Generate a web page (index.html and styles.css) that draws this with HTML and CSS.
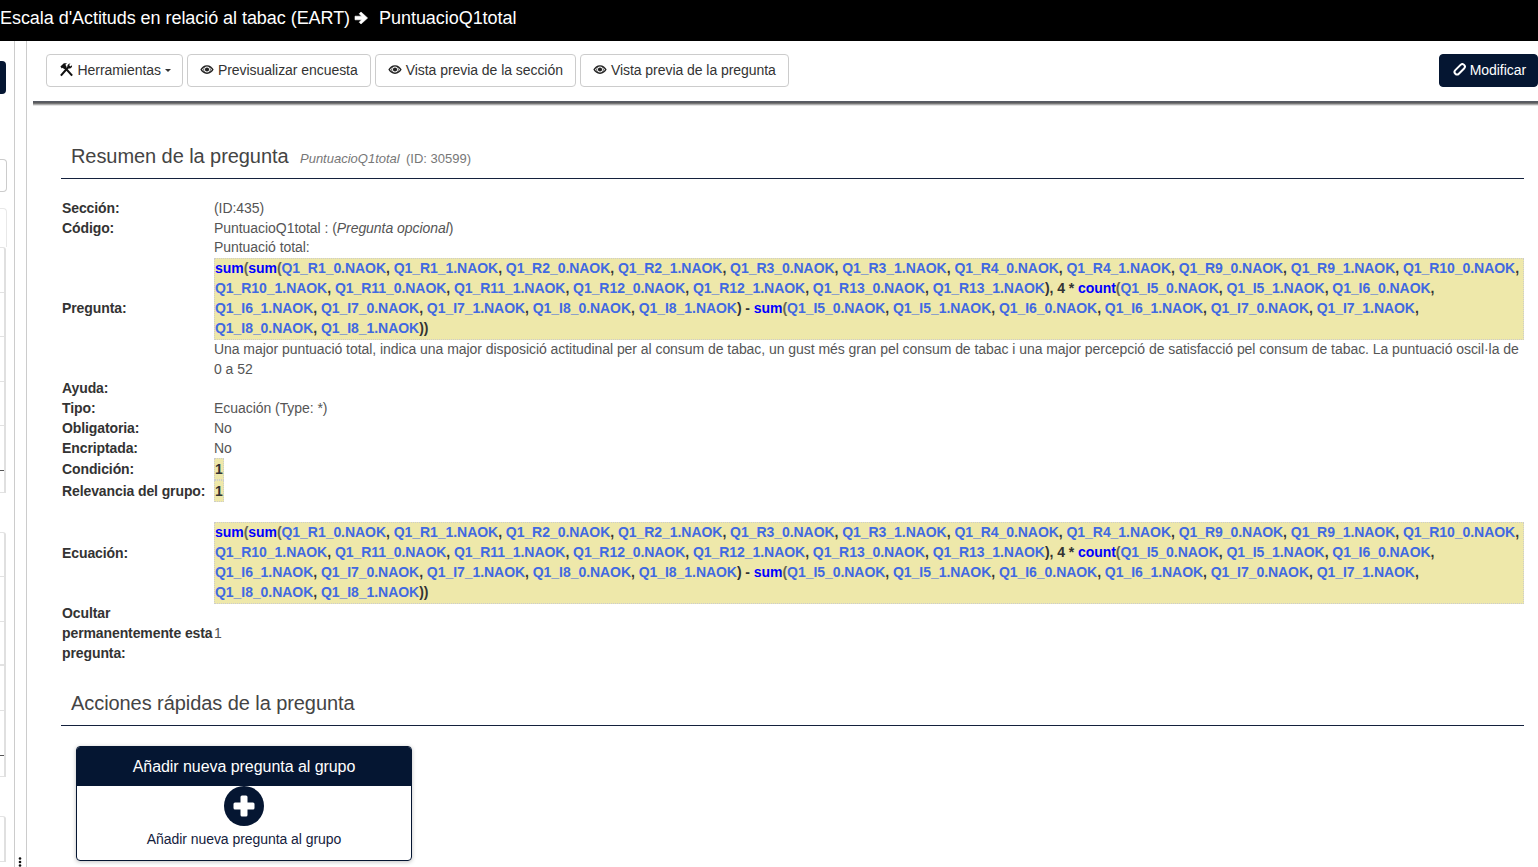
FILE: index.html
```html
<!DOCTYPE html>
<html lang="es">
<head>
<meta charset="utf-8">
<title>PuntuacioQ1total</title>
<link rel="stylesheet" href="styles.css">
</head>
<body>
<header class="topbar">
  <span>Escala d'Actituds en relació al tabac (EART)</span>
  <svg class="arrow" viewBox="0 0 16 14"><path d="M1 5.200h6.600L5.200 2.700 7 1l6.600 6L7 13l-1.800-1.700 2.400-2.500H1z" fill="#fff" stroke="#fff" stroke-width=".6" stroke-linejoin="round"/></svg>
  <span>PuntuacioQ1total</span>
</header>
<div class="layout">
  <aside class="sidebar">
    <div class="tree">
      <div class="s-btn"></div>
      <div class="s-input"></div>
      <div class="s-panel"></div>
      <div class="s-list">
        <div class="s-row"></div><div class="s-row"></div><div class="s-row"></div><div class="s-row"></div><div class="s-row s-dark"></div><div class="s-row s-short"></div>
      </div>
      <div class="s-list s-list2">
        <div class="s-row"></div><div class="s-row"></div><div class="s-row s-thick"></div><div class="s-row"></div><div class="s-row s-dark"></div><div class="s-row s-short"></div>
      </div>
      <div class="s-list s-list3">
        <div class="s-row"></div>
      </div>
    </div>
    <svg class="dots" viewBox="0 0 4 10"><circle cx="2" cy="1.500" r="1.300"/><circle cx="2" cy="5" r="1.300"/><circle cx="2" cy="8.500" r="1.300"/></svg>
  </aside>
  <main class="content">
    <nav class="toolbar">
      <a class="btn">
        <svg class="ico-tools" viewBox="0 0 16 16"><path d="M2 14.500 9.800 5.600M14 14.500 5 4.500" fill="none" stroke="#111" stroke-width="2.200"/><path d="M1.500 4.800 5.200 1.200h3.300L6.800 3l1.400 2.400-2.400 2.200-2-1.500-.8.700z" fill="#111"/><path d="M9 5.500c-.6-2 .8-4 3.200-4L10.800 3.300l1.200 1.500 1.900-1.300c.5 2.200-1.500 3.900-3.400 3.300z" fill="#111"/></svg>
        Herramientas <i class="caret"></i>
      </a>
      <a class="btn"><svg class="ico-eye" viewBox="0 0 16 12"><path fill-rule="evenodd" d="M8 1C4.500 1 1.800 3.300.4 6 1.800 8.700 4.500 11 8 11s6.200-2.300 7.600-5C14.200 3.300 11.500 1 8 1zM8 2.600a3.400 3.400 0 1 1 0 6.800 3.400 3.400 0 0 1 0-6.800zM2.300 6c.6-1 1.400-1.800 2.300-2.400a4.600 4.600 0 0 0 0 4.800C3.700 7.800 2.900 7 2.300 6zm11.400 0c-.6 1-1.400 1.800-2.300 2.400a4.600 4.600 0 0 0 0-4.800c.9.600 1.700 1.400 2.300 2.400z" fill="#222"/><circle cx="8" cy="6" r="2.400" fill="#222"/></svg> Previsualizar encuesta</a>
      <a class="btn"><svg class="ico-eye" viewBox="0 0 16 12"><path fill-rule="evenodd" d="M8 1C4.500 1 1.800 3.300.4 6 1.800 8.700 4.500 11 8 11s6.200-2.300 7.600-5C14.200 3.300 11.500 1 8 1zM8 2.600a3.400 3.400 0 1 1 0 6.800 3.400 3.400 0 0 1 0-6.800zM2.300 6c.6-1 1.400-1.800 2.300-2.400a4.600 4.600 0 0 0 0 4.800C3.700 7.800 2.900 7 2.300 6zm11.400 0c-.6 1-1.400 1.800-2.300 2.400a4.600 4.600 0 0 0 0-4.800c.9.600 1.700 1.400 2.300 2.400z" fill="#222"/><circle cx="8" cy="6" r="2.400" fill="#222"/></svg> Vista previa de la sección</a>
      <a class="btn"><svg class="ico-eye" viewBox="0 0 16 12"><path fill-rule="evenodd" d="M8 1C4.500 1 1.800 3.300.4 6 1.800 8.700 4.500 11 8 11s6.200-2.300 7.600-5C14.200 3.300 11.500 1 8 1zM8 2.600a3.400 3.400 0 1 1 0 6.800 3.400 3.400 0 0 1 0-6.800zM2.300 6c.6-1 1.400-1.800 2.300-2.400a4.600 4.600 0 0 0 0 4.800C3.700 7.800 2.900 7 2.300 6zm11.400 0c-.6 1-1.400 1.800-2.300 2.400a4.600 4.600 0 0 0 0-4.800c.9.600 1.700 1.400 2.300 2.400z" fill="#222"/><circle cx="8" cy="6" r="2.400" fill="#222"/></svg> Vista previa de la pregunta</a>
      <a class="btn btn-primary"><svg class="ico-pencil" viewBox="0 0 14 14"><rect x="-1.200" y="4.800" width="12.400" height="5" rx="2.500" transform="rotate(-45 7 7) translate(3 -.3)" fill="none" stroke="#fff" stroke-width="2"/></svg> Modificar</a>
    </nav>
    <div class="toolbar-rule"></div>
    <section class="panel">
      <h3 class="heading">Resumen de la pregunta <small class="sub"><em>PuntuacioQ1total</em> &nbsp;(ID: 30599)</small></h3>
      <table class="summary">
        <tr><th>Sección:</th><td>(ID:435)</td></tr>
        <tr><th>Código:</th><td>PuntuacioQ1total : (<em>Pregunta opcional</em>)</td></tr>
        <tr><th>Pregunta:</th><td><span class="lead">Puntuació total:</span>
          <div class="em"><b class="f">sum</b><b class="p">(</b><b class="f">sum</b><b class="p">(</b><b class="v">Q1_R1_0.NAOK</b>, <b class="v">Q1_R1_1.NAOK</b>, <b class="v">Q1_R2_0.NAOK</b>, <b class="v">Q1_R2_1.NAOK</b>, <b class="v">Q1_R3_0.NAOK</b>, <b class="v">Q1_R3_1.NAOK</b>, <b class="v">Q1_R4_0.NAOK</b>, <b class="v">Q1_R4_1.NAOK</b>, <b class="v">Q1_R9_0.NAOK</b>, <b class="v">Q1_R9_1.NAOK</b>, <b class="v">Q1_R10_0.NAOK</b>, <b class="v">Q1_R10_1.NAOK</b>, <b class="v">Q1_R11_0.NAOK</b>, <b class="v">Q1_R11_1.NAOK</b>, <b class="v">Q1_R12_0.NAOK</b>, <b class="v">Q1_R12_1.NAOK</b>, <b class="v">Q1_R13_0.NAOK</b>, <b class="v">Q1_R13_1.NAOK</b>), 4 * <b class="f">count</b><b class="p">(</b><b class="v">Q1_I5_0.NAOK</b>, <b class="v">Q1_I5_1.NAOK</b>, <b class="v">Q1_I6_0.NAOK</b>, <b class="v">Q1_I6_1.NAOK</b>, <b class="v">Q1_I7_0.NAOK</b>, <b class="v">Q1_I7_1.NAOK</b>, <b class="v">Q1_I8_0.NAOK</b>, <b class="v">Q1_I8_1.NAOK</b>) - <b class="f">sum</b><b class="p">(</b><b class="v">Q1_I5_0.NAOK</b>, <b class="v">Q1_I5_1.NAOK</b>, <b class="v">Q1_I6_0.NAOK</b>, <b class="v">Q1_I6_1.NAOK</b>, <b class="v">Q1_I7_0.NAOK</b>, <b class="v">Q1_I7_1.NAOK</b>, <b class="v">Q1_I8_0.NAOK</b>, <b class="v">Q1_I8_1.NAOK</b>))</div>
          <p class="desc">Una major puntuació total, indica una major disposició actitudinal per al consum de tabac, un gust més gran pel consum de tabac i una major percepció de satisfacció pel consum de tabac. La puntuació oscil·la de 0 a 52</p></td></tr>
        <tr><th>Ayuda:</th><td></td></tr>
        <tr><th>Tipo:</th><td>Ecuación (Type: *)</td></tr>
        <tr><th>Obligatoria:</th><td>No</td></tr>
        <tr><th>Encriptada:</th><td>No</td></tr>
        <tr><th>Condición:</th><td><span class="em em-one">1</span></td></tr>
        <tr><th>Relevancia del grupo:</th><td><span class="em em-one">1</span></td></tr>
        <tr><th>Ecuación:</th><td><br>
          <div class="em"><b class="f">sum</b><b class="p">(</b><b class="f">sum</b><b class="p">(</b><b class="v">Q1_R1_0.NAOK</b>, <b class="v">Q1_R1_1.NAOK</b>, <b class="v">Q1_R2_0.NAOK</b>, <b class="v">Q1_R2_1.NAOK</b>, <b class="v">Q1_R3_0.NAOK</b>, <b class="v">Q1_R3_1.NAOK</b>, <b class="v">Q1_R4_0.NAOK</b>, <b class="v">Q1_R4_1.NAOK</b>, <b class="v">Q1_R9_0.NAOK</b>, <b class="v">Q1_R9_1.NAOK</b>, <b class="v">Q1_R10_0.NAOK</b>, <b class="v">Q1_R10_1.NAOK</b>, <b class="v">Q1_R11_0.NAOK</b>, <b class="v">Q1_R11_1.NAOK</b>, <b class="v">Q1_R12_0.NAOK</b>, <b class="v">Q1_R12_1.NAOK</b>, <b class="v">Q1_R13_0.NAOK</b>, <b class="v">Q1_R13_1.NAOK</b>), 4 * <b class="f">count</b><b class="p">(</b><b class="v">Q1_I5_0.NAOK</b>, <b class="v">Q1_I5_1.NAOK</b>, <b class="v">Q1_I6_0.NAOK</b>, <b class="v">Q1_I6_1.NAOK</b>, <b class="v">Q1_I7_0.NAOK</b>, <b class="v">Q1_I7_1.NAOK</b>, <b class="v">Q1_I8_0.NAOK</b>, <b class="v">Q1_I8_1.NAOK</b>) - <b class="f">sum</b><b class="p">(</b><b class="v">Q1_I5_0.NAOK</b>, <b class="v">Q1_I5_1.NAOK</b>, <b class="v">Q1_I6_0.NAOK</b>, <b class="v">Q1_I6_1.NAOK</b>, <b class="v">Q1_I7_0.NAOK</b>, <b class="v">Q1_I7_1.NAOK</b>, <b class="v">Q1_I8_0.NAOK</b>, <b class="v">Q1_I8_1.NAOK</b>))</div></td></tr>
        <tr><th>Ocultar permanentemente esta pregunta:</th><td>1</td></tr>
      </table>
      <h3 class="heading heading-actions">Acciones rápidas de la pregunta</h3>
      <div class="card">
        <div class="card-head">Añadir nueva pregunta al grupo</div>
        <div class="card-body">
          <svg class="ico-plus" viewBox="0 0 40 40"><circle cx="20" cy="20" r="20" fill="#051632"/><rect x="9.500" y="16.500" width="21" height="7" rx="1.500" fill="#fff"/><rect x="16.500" y="9.500" width="7" height="21" rx="1.500" fill="#fff"/></svg>
          <p class="card-text">Añadir nueva pregunta al grupo</p>
        </div>
      </div>
    </section>
  </main>
</div>
</body>
</html>
```
FILE: styles.css
```css
* { box-sizing: border-box; }
html, body { height: 100%; }
body {
  margin: 0;
  overflow: hidden;
  background: #fff;
  color: #333;
  font-family: "Liberation Sans", Arial, sans-serif;
  font-size: 14px;
  line-height: 20px;
  letter-spacing: -.05px;
}
.topbar {
  display: flex;
  align-items: center;
  height: 41px;
  padding-bottom: 6px;
  background: #000;
  color: #fff;
  font-size: 18px;
  white-space: nowrap;
}
.arrow { width: 16px; height: 14px; margin: 1px 9px 0 4px; }
.layout { display: flex; height: 826px; }

.sidebar {
  position: relative;
  flex: 0 0 27px;
  border-right: 1px solid #ccc;
}
.tree {
  width: 15px;
  height: 100%;
  border-right: 1px solid #ccc;
  padding-top: 20px;
}
.s-btn {
  width: 6px;
  height: 33px;
  background: #051632;
  border-radius: 0 4px 4px 0;
}
.s-input {
  width: 7px;
  height: 33px;
  margin-top: 65px;
  border: 1px solid #ccc;
  border-left: 0;
  border-radius: 0 4px 4px 0;
}
.s-panel {
  width: 7px;
  height: 39px;
  margin-top: 16px;
  border: 1px solid #e8e8e8;
  border-left: 0;
  border-bottom: 0;
  border-radius: 0 4px 0 0;
}
.s-list {
  width: 6px;
  border-top: 1px solid #e4e4e4;
  border-right: 2px solid #e0e0e0;
  border-radius: 0 3px 0 0;
}
.s-list2 { margin-top: 39px; }
.s-list3 { margin-top: 39px; }
.s-row { height: 44.6px; border-bottom: 1px solid #e2e2e2; }
.s-short { height: 21.600px; }
.s-dark { border-bottom-color: #555; }
.s-thick { border-bottom-width: 2px; }
.dots {
  position: absolute;
  left: 18px;
  bottom: 0;
  width: 4px;
  height: 10px;
  fill: #111;
}

.content { flex: 1; min-width: 0; padding-left: 6px; }
.toolbar {
  display: flex;
  gap: 4px;
  height: 60px;
  padding: 13px 0 0 13px;
  background: #fff;
}
.toolbar-rule {
  height: 5px;
  background: linear-gradient(#555a66, #5c5c5c 40%, #c8c8c8 80%, #fff);
}
.btn {
  display: flex;
  align-items: center;
  height: 33px;
  padding: 0 12.500px 2px 12px;
  border: 1px solid #ccc;
  border-radius: 4px;
  background: #fff;
  color: #333;
  white-space: nowrap;
}
.btn svg { margin-right: 3.500px; flex: none; }
.btn-primary {
  margin-left: auto;
  background: #051632;
  border-color: #051632;
  color: #fff;
  padding-right: 11px;
}
.ico-tools { width: 15px; height: 15px; }
.ico-eye { width: 14px; height: 11px; }
.ico-pencil { width: 14px; height: 14px; }
.caret {
  display: inline-block;
  width: 0;
  height: 0;
  margin: 2px -1px 0 4px;
  border-top: 3.5px solid #333;
  border-left: 3.5px solid transparent;
  border-right: 3.5px solid transparent;
}

.panel { padding: 0 14px 0 28px; }
.heading {
  margin: 36px 0 0;
  height: 37px;
  padding-left: 10px;
  border-bottom: 1px solid #14213d;
  color: #444;
  font-size: 20px;
  font-weight: 400;
  line-height: 28px;
  letter-spacing: -.07px;
}
.sub { margin-left: 6px; color: #777; font-size: 13px; letter-spacing: 0; }
.sub em { margin-right: -1px; }
.heading-actions { margin-top: 26px; }
.summary {
  width: 100%;
  margin-top: 19px;
  border-collapse: collapse;
}
.summary th {
  width: 153px;
  padding: 0 0 0 1px;
  color: #333;
  font-weight: 700;
  text-align: left;
  vertical-align: middle;
  letter-spacing: -.1px;
}
.summary td { padding: 0; color: #555; vertical-align: middle; }
.lead { display: block; height: 20px; line-height: 18px; }
.desc { margin: 0 0 -1px; }
.em {
  margin-bottom: -1px;
  padding-bottom: 1px;
  background: #eee8aa;
  border: 1px dotted #ccc;
  color: #333;
  font-weight: 700;
}
.em::before { content: ""; display: block; margin-top: -1px; }
.em-one { display: inline-block; margin-bottom: 0; padding: 0; height: 22px; }
.em-one::before { display: none; }
.f { color: #00f; }
.p { color: #665; }
.v { color: #4169e1; }

.card {
  width: 336px;
  height: 115px;
  margin: 20px 0 0 15px;
  border: 1px solid #051632;
  border-radius: 4px;
  box-shadow: 0 1px 4px rgba(0, 0, 0, .25);
  text-align: center;
  overflow: hidden;
}
.card-head {
  height: 39px;
  background: #051632;
  color: #fff;
  font-size: 16px;
  line-height: 39px;
}
.card-body { display: flex; flex-direction: column; align-items: center; }
.ico-plus { width: 40px; height: 40px; }
.card-text { margin: 3px 0 0; color: #14213d; }
```
